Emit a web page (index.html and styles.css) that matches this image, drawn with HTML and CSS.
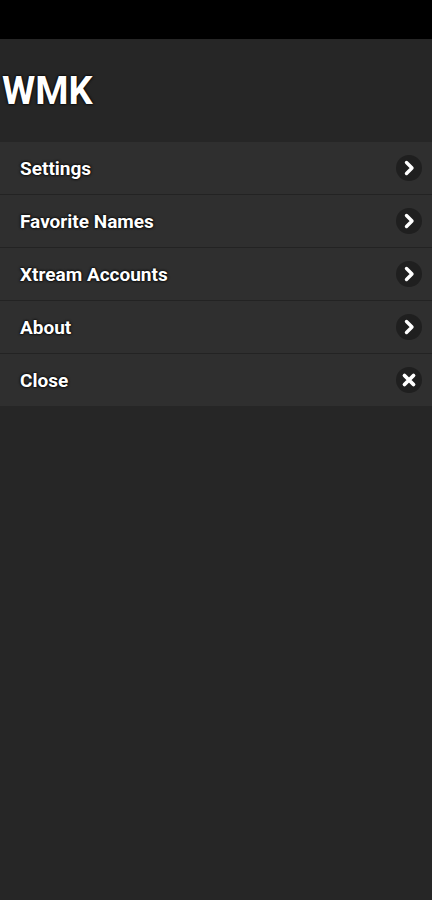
FILE: index.html
```html
<!DOCTYPE html>
<html lang="en">
<head>
  <meta charset="UTF-8" />
  <meta name="viewport" content="width=device-width, initial-scale=1.0"/>
  <title>WMK</title>
  <link rel="stylesheet" href="styles.css">
</head>
<body>
  <div class="statusbar"></div>

  <header class="cabecalho">
    <h1>WMK</h1>
  </header>

  <nav class="menu">
    <a class="item" href="#">
      <span>Settings</span>
      <span class="icone">
        <svg viewBox="0 0 24 24" width="24" height="24"><path d="M9.5 6.5 L15 12 L9.5 17.5" /></svg>
      </span>
    </a>
    <a class="item" href="#">
      <span>Favorite Names</span>
      <span class="icone">
        <svg viewBox="0 0 24 24" width="24" height="24"><path d="M9.5 6.5 L15 12 L9.5 17.5" /></svg>
      </span>
    </a>
    <a class="item" href="#">
      <span>Xtream Accounts</span>
      <span class="icone">
        <svg viewBox="0 0 24 24" width="24" height="24"><path d="M9.5 6.5 L15 12 L9.5 17.5" /></svg>
      </span>
    </a>
    <a class="item" href="#">
      <span>About</span>
      <span class="icone">
        <svg viewBox="0 0 24 24" width="24" height="24"><path d="M9.5 6.5 L15 12 L9.5 17.5" /></svg>
      </span>
    </a>
    <a class="item" href="#">
      <span>Close</span>
      <span class="icone">
        <svg viewBox="0 0 24 24" width="24" height="24"><path class="x" d="M7.5 7.5 L16.5 16.5 M16.5 7.5 L7.5 16.5" /></svg>
      </span>
    </a>
  </nav>
</body>
</html>
```

FILE: styles.css
```css
body {
  margin: 0;
  font-family: Roboto, "Liberation Sans", sans-serif;
  background: #262626;
  color: white;
  min-height: 900px;
}

.statusbar {
  height: 39px;
  background: #000;
}

.cabecalho {
  height: 103px;
  display: flex;
  align-items: center;
  padding-left: 2px;
}

.cabecalho h1 {
  margin: 0;
  font-size: 38px;
  font-weight: bold;
  text-shadow: 0 0 3px #000, 0 0 2px #000;
}

.menu {
  display: flex;
  flex-direction: column;
}

.item {
  height: 52px;
  display: flex;
  align-items: center;
  justify-content: space-between;
  padding: 0 10px 0 20px;
  background: #2f2f2f;
  border-bottom: 1px solid #232323;
  color: white;
  text-decoration: none;
  font-size: 19px;
  font-weight: bold;
  text-shadow: 0 0 3px #000, 0 0 2px #000;
}

.item:last-child {
  border-bottom: none;
}

.icone {
  width: 26px;
  height: 26px;
  border-radius: 50%;
  background: #1f1f1f;
  display: flex;
  align-items: center;
  justify-content: center;
}

.icone path {
  fill: none;
  stroke: white;
  stroke-width: 3.4;
  stroke-linecap: round;
  stroke-linejoin: round;
}

.icone path.x {
  stroke-width: 3.8;
}
```
